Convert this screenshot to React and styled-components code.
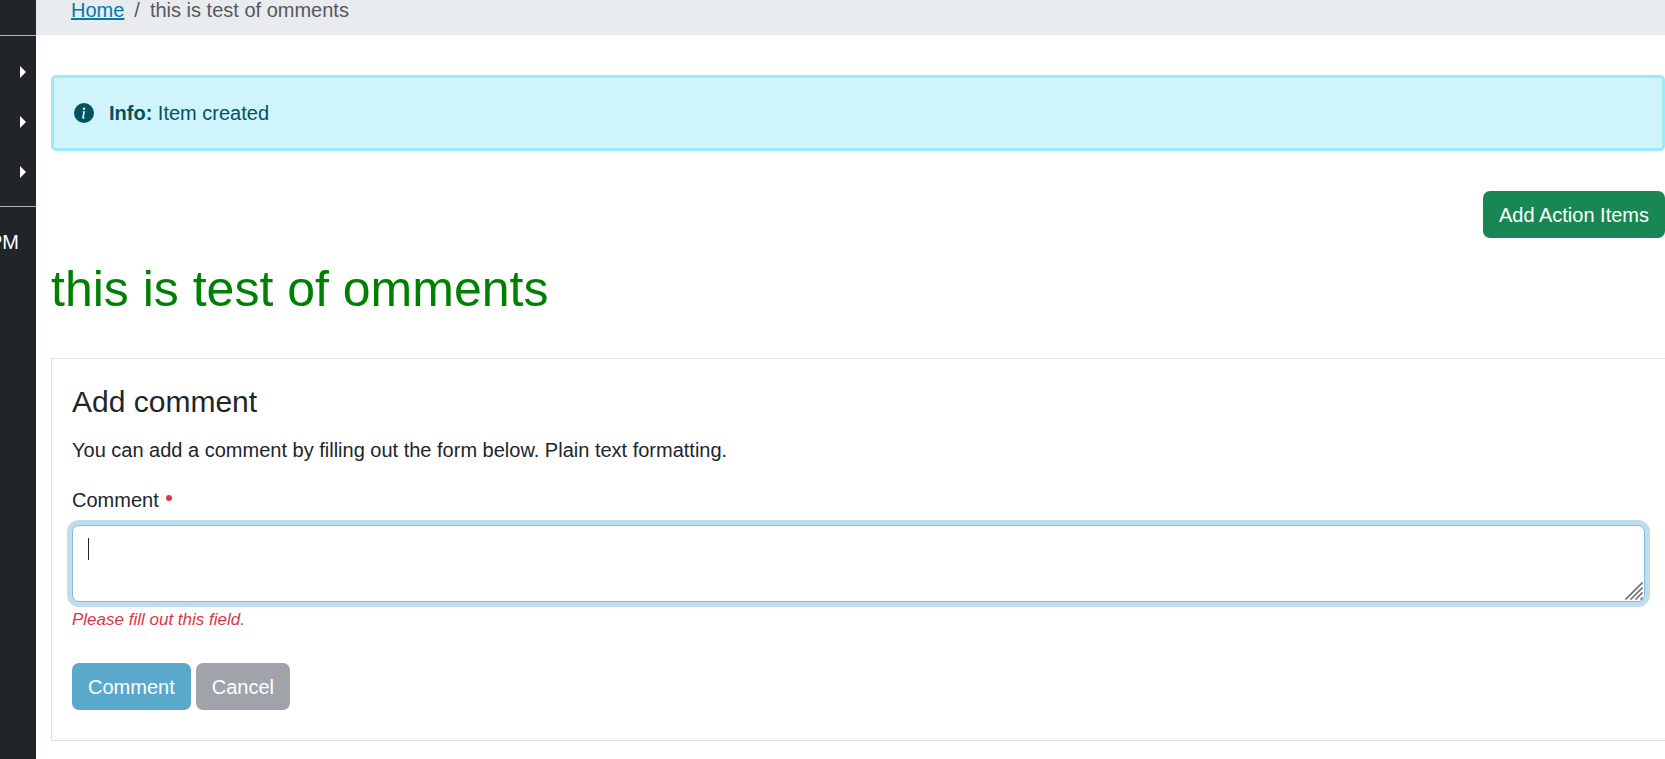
import React from "react";
import styled, { createGlobalStyle } from "styled-components";

const GlobalStyle = createGlobalStyle`
  *, *::before, *::after { box-sizing: border-box; }
  body {
    margin: 0;
    background: #fff;
    color: #212529;
    font: 400 20px/30px "Liberation Sans", Arial, sans-serif;
  }
`;

const Page = styled.div`
  display: flex;
  min-height: 100vh;
  overflow: hidden;
`;

const Sidebar = styled.nav`
  flex: 0 0 36px;
  background: #212529;
  color: #fff;
  overflow: hidden;
  padding-top: 35px;
`;

const MenuGroup = styled.ul`
  list-style: none;
  margin: 0;
  padding: 11px 0 9px;
  border: solid #b1b4b6;
  border-width: 1px 0;
`;

const MenuToggle = styled.button`
  display: flex;
  align-items: center;
  justify-content: flex-end;
  width: 100%;
  height: 50px;
  padding: 0 10px 0 0;
  border: 0;
  background: none;

  &::after {
    content: "";
    border: solid transparent;
    border-width: 6px 0 6px 6px;
    border-left-color: #fff;
  }
`;

const Clock = styled.div`
  display: flex;
  justify-content: flex-end;
  padding: 20px 17px 0 0;
  white-space: nowrap;
`;

const Main = styled.div`
  flex: 1;
  min-width: 0;
`;

const Breadcrumb = styled.nav`
  display: flex;
  gap: 10px;
  height: 35px;
  padding: 0 35px;
  background: #e9ecef;
  color: #58595b;
  line-height: 20px;
`;

const CrumbLink = styled.a`
  color: #007bb1;
  text-decoration: underline;
`;

const Content = styled.main`
  display: flex;
  flex-direction: column;
  padding: 40px 0 20px 15px;
`;

const Alert = styled.div`
  display: flex;
  align-items: center;
  gap: 15px;
  margin-bottom: 40px;
  padding: 20px;
  border: 3px solid #9eeaf9;
  border-radius: 5px;
  background: #cff4fc;
  color: #055160;

  svg { display: block; width: 20px; height: 20px; }
`;

const Button = styled.button`
  padding: 9px 16px 8px;
  border: 0;
  border-radius: 7px;
  background: ${(p) => p.$bg};
  color: #fff;
  font: inherit;
`;

const Toolbar = styled.div`
  display: flex;
  justify-content: ${(p) => p.$align || "flex-start"};
  gap: 5px;
`;

const Title = styled.h1`
  margin: 21px 0 39px;
  color: #008000;
  font-size: 50px;
  font-weight: 400;
  line-height: 60px;
`;

const CommentForm = styled.form`
  padding: 25px 20px 30px;
  border: 1px solid #dee2e6;
  border-right: 0;
`;

const FormTitle = styled.h2`
  margin: 0 0 15px;
  font-size: 30px;
  font-weight: 400;
  line-height: 36px;
`;

const Help = styled.p`
  margin: 0 0 20px;
`;

const Label = styled.label`
  display: flex;
  align-items: center;
  gap: 7px;
  margin-bottom: 10px;
`;

const RequiredDot = styled.span`
  width: 6px;
  height: 6px;
  margin-bottom: 4px;
  border-radius: 50%;
  background: #dc3545;
`;

const Field = styled.div`
  position: relative;
`;

const TextArea = styled.textarea`
  display: block;
  width: 100%;
  height: 77px;
  padding: 8px 15px;
  border: 1px solid #80bdd9;
  border-radius: 7px;
  outline: 0;
  box-shadow: 0 0 0 5px #bfdeeb;
  color: inherit;
  caret-color: transparent;
  font: inherit;
  resize: none;
`;

const Caret = styled.span`
  position: absolute;
  top: 13px;
  left: 16px;
  width: 1px;
  height: 22px;
  background: #212529;
`;

const Grip = styled.svg`
  position: absolute;
  right: 2px;
  bottom: 2px;
  width: 18px;
  height: 18px;
  pointer-events: none;
`;

const FieldError = styled.p`
  margin: 5px 0 30px;
  color: #dc3545;
  font-size: 17px;
  font-style: italic;
  line-height: 26px;
`;

function InfoIcon() {
  return (
    <svg viewBox="0 0 16 16" fill="currentColor" aria-hidden="true">
      <path d="M8 16A8 8 0 1 0 8 0a8 8 0 0 0 0 16m.93-9.412-1 4.705c-.07.34.029.533.304.533.194 0 .487-.07.686-.246l-.088.416c-.287.346-.92.598-1.465.598-.703 0-1.002-.422-.808-1.319l.738-3.468c.064-.293.006-.399-.287-.47l-.451-.081.082-.381zM8 5.5a1 1 0 1 1 0-2 1 1 0 0 1 0 2" />
    </svg>
  );
}

export default function App() {
  return (
    <>
      <GlobalStyle />
      <Page>
        <Sidebar>
          <MenuGroup>
            {["Content", "Users", "Settings"].map((name) => (
              <li key={name}>
                <MenuToggle type="button" aria-label={name} />
              </li>
            ))}
          </MenuGroup>
          <Clock>PM</Clock>
        </Sidebar>
        <Main>
          <Breadcrumb aria-label="Breadcrumb">
            <CrumbLink href="#">Home</CrumbLink>
            <span>/</span>
            <span>this is test of omments</span>
          </Breadcrumb>
          <Content>
            <Alert role="status">
              <InfoIcon />
              <span>
                <strong>Info:</strong> Item created
              </span>
            </Alert>
            <Toolbar $align="flex-end">
              <Button type="button" $bg="#198754">Add Action Items</Button>
            </Toolbar>
            <Title>this is test of omments</Title>
            <CommentForm onSubmit={(e) => e.preventDefault()}>
              <FormTitle>Add comment</FormTitle>
              <Help>
                You can add a comment by filling out the form below. Plain text
                formatting.
              </Help>
              <Label htmlFor="comment">
                Comment <RequiredDot />
              </Label>
              <Field>
                <TextArea id="comment" required aria-describedby="comment-error" />
                <Caret />
                <Grip viewBox="0 0 18 18" stroke="#6f6f6f" strokeWidth="1.6">
                  <path d="M0.5 17.5 17.5 0.5M5.5 17.5 17.5 5.5M10.5 17.5 17.5 10.5M15.5 17.5 17.5 15.5" />
                </Grip>
              </Field>
              <FieldError id="comment-error">Please fill out this field.</FieldError>
              <Toolbar>
                <Button type="submit" $bg="#5aa9cd">Comment</Button>
                <Button type="button" $bg="#a0a4aa">Cancel</Button>
              </Toolbar>
            </CommentForm>
          </Content>
        </Main>
      </Page>
    </>
  );
}
